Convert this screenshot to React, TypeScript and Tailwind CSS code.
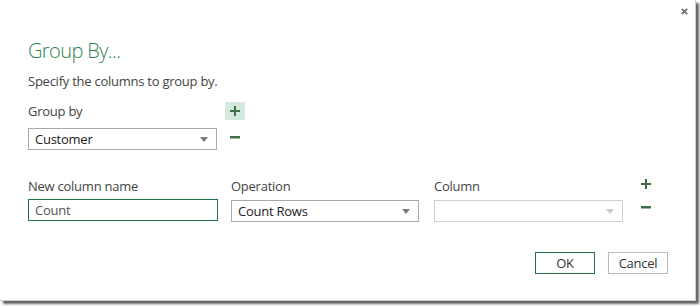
import React from 'react';

const font = { fontFamily: '"Open Sans", "Noto Sans", sans-serif' };

function Caret({ light }: { light?: boolean }) {
  return (
    <svg width="8" height="5" viewBox="0 0 8 5" className="shrink-0">
      <path d="M0 0 L8 0 L4 5 Z" fill={light ? '#c8c8c8' : '#7a7a7a'} />
    </svg>
  );
}

function Plus() {
  return (
    <svg width="10" height="10" viewBox="0 0 10 10">
      <path d="M4 0h2v4h4v2H6v4H4V6H0V4h4z" fill="#3f6e4b" />
    </svg>
  );
}

function Minus() {
  return (
    <svg width="10" height="3" viewBox="0 0 10 3">
      <rect width="10" height="2.5" fill="#3f6e4b" />
    </svg>
  );
}

function Select({ value, width, light }: { value?: string; width: string; light?: boolean }) {
  return (
    <div
      className={`${width} h-[22px] flex items-center justify-between pl-[6px] pr-[8px] border ${
        light ? 'border-[#d0d0d0]' : 'border-[#a9a9a9]'
      } bg-white`}
    >
      <span className="text-[13px] text-[#222] leading-none">{value}</span>
      <Caret light={light} />
    </div>
  );
}

export default function App() {
  return (
    <div className="w-[700px] h-[306px] bg-white tracking-[-0.25px]" style={font}>
      <div className="relative w-[696px] h-[301px] bg-white border-r border-b border-[#cfcfcf] shadow-[3px_3px_2px_rgba(0,0,0,0.6)] pl-[28px] pt-[37px]">
        {/* close */}
        <button className="absolute right-[7px] top-[8px] w-[7px] h-[7px]">
          <svg width="7" height="7" viewBox="0 0 7 7" className="block">
            <path d="M0.8 0.8 L6.2 6.2 M6.2 0.8 L0.8 6.2" stroke="#707070" strokeWidth="1.8" />
          </svg>
        </button>

        <h1 className="text-[20px] leading-[28px] font-light tracking-[-0.6px] text-[#2f8152]">Group By...</h1>
        <p className="mt-[7px] text-[13px] leading-[18px] text-[#444]">Specify the columns to group by.</p>

        {/* Group by */}
        <div className="mt-[11px] flex gap-[8px]">
          <div className="w-[189px]">
            <div className="h-[20px] text-[13px] leading-[20px] text-[#444]">Group by</div>
            <div className="mt-[7px]">
              <Select value="Customer" width="w-[189px]" />
            </div>
          </div>
          <div className="flex flex-col items-center pt-[1px]">
            <div className="w-[20px] h-[18px] bg-[#d4eadd] flex items-center justify-center">
              <Plus />
            </div>
            <div className="mt-[16px]">
              <Minus />
            </div>
          </div>
        </div>

        {/* Aggregations */}
        <div className="mt-[27px] flex">
          <div className="w-[190px]">
            <div className="h-[18px] text-[13px] leading-[18px] text-[#444]">New column name</div>
            <div className="mt-[4px] w-[190px] h-[22px] border border-[#217346] flex items-center pl-[6px]">
              <span className="text-[13px] text-[#555] leading-none">Count</span>
            </div>
          </div>
          <div className="ml-[13px] w-[188px]">
            <div className="h-[18px] text-[13px] leading-[18px] text-[#444]">Operation</div>
            <div className="mt-[5px]">
              <Select value="Count Rows" width="w-[188px]" />
            </div>
          </div>
          <div className="ml-[15px] w-[189px]">
            <div className="h-[18px] text-[13px] leading-[18px] text-[#444]">Column</div>
            <div className="mt-[5px]">
              <Select width="w-[189px]" light />
            </div>
          </div>
          <div className="ml-[18px] flex flex-col items-center pt-[2px]">
            <Plus />
            <div className="mt-[17px]">
              <Minus />
            </div>
          </div>
        </div>

        {/* Buttons */}
        <div className="mt-[30px] flex justify-end gap-[13px] pr-[27px]">
          <button className="w-[60px] h-[22px] border border-[#217346] text-[13px] text-[#333] leading-none">OK</button>
          <button className="w-[60px] h-[22px] border border-[#bdbdbd] text-[13px] text-[#333] leading-none">Cancel</button>
        </div>
      </div>
    </div>
  );
}
